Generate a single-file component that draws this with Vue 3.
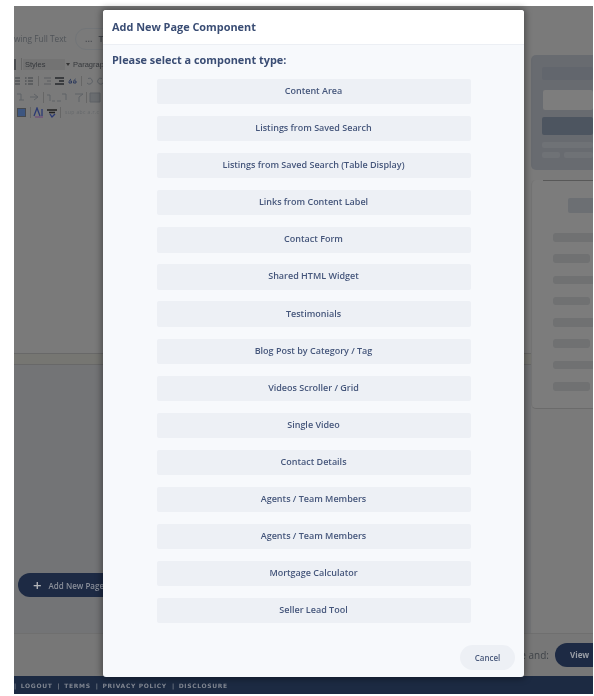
<script setup>
const components = [
  'Content Area',
  'Listings from Saved Search',
  'Listings from Saved Search (Table Display)',
  'Links from Content Label',
  'Contact Form',
  'Shared HTML Widget',
  'Testimonials',
  'Blog Post by Category / Tag',
  'Videos Scroller / Grid',
  'Single Video',
  'Contact Details',
  'Agents / Team Members',
  'Agents / Team Members',
  'Mortgage Calculator',
  'Seller Lead Tool'
]
const rows = ['long', 'short', 'long', 'short', 'long', 'short', 'long', 'short']
const footerLinks = ['LOGOUT', 'TERMS', 'PRIVACY POLICY', 'DISCLOSURE']
</script>

<template>
  <div class="page">
    <div class="stage">
      <div class="work">
        <section class="left">
          <div class="topbar">
            <span class="viewing">wing Full Text</span>
            <span class="pill"><span>...</span><span>Tr</span></span>
          </div>
          <div class="toolbar">
            <div class="tool-row r1">
              <span class="sq"></span><span class="sep"></span>
              <span class="select">Styles</span>
              <i class="caret"></i>
              <span class="para">Paragraph</span>
            </div>
            <div class="tool-row r2">
              <svg width="90" height="10" viewBox="0 0 90 10" fill="none" stroke="#3f4247" stroke-width="1">
                <path d="M1 2h5M1 5h5M1 8h5M11 2h1.500M11 5h1.500M11 8h1.500M14 2h5M14 5h5M14 8h5" />
                <path d="M24.500 0v10" stroke="#666" />
                <path d="M30 2h7M33 5h4M30 8h7" stroke="#5a5d60" />
                <path d="M41 2h9M45 5h5M41 8h9" stroke="#26282c" stroke-width="1.400" />
                <path d="M57 3c-1.500 1-2 2-2 4h2.500V5H56M61.500 3c-1.500 1-2 2-2 4H62V5h-1.500" stroke="#2d3a5c" />
                <path d="M67.500 0v10" stroke="#666" />
                <path d="M74 2.500a3 3 0 1 1-1 4.500" stroke="#5d6166" />
                <path d="M88 2.500a3 3 0 1 0 1 4.500" stroke="#5d6166" />
              </svg>
            </div>
            <div class="tool-row r3">
              <svg width="90" height="11" viewBox="0 0 90 11" fill="none" stroke="#5f6266" stroke-width="1">
                <path d="M3 2h4v6M5 8h5M16 5h7M20 2l4 3-4 3" />
                <path d="M29.500 0v11" stroke="#666" />
                <path d="M33 3h3v6M38 9h3M43 9h4M48 2h4v6" />
                <path d="M61 2h8l-4 3v5" />
                <path d="M72.500 0v11" stroke="#666" />
                <path d="M76 1h10v9H76z" fill="#6a6d70" />
              </svg>
            </div>
            <div class="tool-row r4">
              <svg width="48" height="11" viewBox="0 0 48 11" fill="none">
                <rect x="3.500" y="1.500" width="8" height="8" fill="#3d5680" stroke="#46494e" />
                <path d="M16.500 0v11" stroke="#666" />
                <path d="M20 9l3-8 3 8M28 9V2" stroke="#2b3a73" stroke-width="1.300" />
                <path d="M21 10h8" stroke="#6b3f7a" />
                <path d="M33 3h10M35 5.500h6" stroke="#222" stroke-width="1.500" />
                <path d="M36 7l2 3 3-3" stroke="#2b3a73" stroke-width="1.300" />
                <path d="M46.500 0v11" stroke="#666" />
              </svg>
              <span class="tiny">sup abc a.r.c</span>
            </div>
          </div>
          <div class="editor-end"></div>
          <div class="add-wrap">
            <span class="add-btn"><span class="plus">+</span>Add New Page</span>
          </div>
        </section>
        <aside class="right">
          <div class="card filters">
            <div class="f-bar"></div>
            <div class="f-input"></div>
            <div class="f-btn"></div>
            <div class="f-line"></div>
            <div class="f-two"><span class="a"></span><span class="b"></span></div>
          </div>
          <div class="card list">
            <div class="l-top"></div>
            <div class="l-head"></div>
            <div class="l-rows">
              <div v-for="(r, i) in rows" :key="i" class="l-row" :class="r"></div>
            </div>
          </div>
        </aside>
      </div>
      <div class="actions">
        <span class="save-text">Save and:</span>
        <span class="view-btn">View</span>
      </div>
      <footer class="footer">
        <span class="bar">|</span>
        <template v-for="(l, i) in footerLinks" :key="l">
          <span class="bar" v-if="i > 0">|</span>
          <span class="link">{{ l }}</span>
        </template>
      </footer>
    </div>

    <div class="modal">
      <header class="m-head">Add New Page Component</header>
      <div class="m-body">
        <h2 class="m-sub">Please select a component type:</h2>
        <div class="m-list">
          <button v-for="(c, i) in components" :key="i" class="m-item">{{ c }}</button>
        </div>
        <div class="m-foot"><button class="cancel">Cancel</button></div>
      </div>
    </div>
  </div>
</template>

<style>
html, body { margin: 0; background: #fff; }
</style>

<style scoped>
.page {
  position: relative;
  box-sizing: border-box;
  width: 594px;
  height: 696px;
  padding: 6px 1px 2px 14px;
  background: #fff;
  font-family: "Open Sans", sans-serif;
  overflow: hidden;
  filter: blur(0.3px);
}
.stage {
  height: 688px;
  display: flex;
  flex-direction: column;
  background: #7a7a7a;
  overflow: hidden;
}
.work { height: 627px; display: flex; }
.left { width: 517px; display: flex; flex-direction: column; flex: none; }
.topbar {
  height: 46px;
  box-sizing: border-box;
  padding-top: 22px;
  display: flex;
  align-items: flex-start;
  gap: 7px;
  font-size: 9px;
  color: #4f5358;
}
.viewing { width: 54px; white-space: nowrap; line-height: 22px; font-size: 8.300px; }
.pill {
  box-sizing: border-box;
  display: flex;
  gap: 6px;
  width: 60px;
  height: 22px;
  line-height: 20px;
  padding-left: 9px;
  border: 1px solid #727578;
  border-radius: 11px;
  color: #44474c;
  font-weight: 600;
}
.toolbar { height: 73px; background: #7a7a7a; overflow: hidden; }
.tool-row { display: flex; align-items: center; height: 14px; }
.r1 { height: 16px; margin-top: 4px; font-family: "Liberation Sans", sans-serif; font-size: 7.500px; color: #35383c; }
.sq { width: 2px; height: 11px; background: #4b4d50; }
.sep { width: 1px; height: 12px; background: #666; margin: 0 1px 0 5px; }
.select {
  display: block;
  box-sizing: border-box;
  width: 42px;
  height: 11px;
  line-height: 11px;
  padding-left: 2px;
  background: #737373;
}
.caret { width: 0; height: 0; margin-left: 1px; border: 2.500px solid transparent; border-top: 3px solid #333; border-bottom: 0; }
.para { margin-left: 3px; white-space: nowrap; }
.r2 { margin-top: 1px; height: 16px; }
.r3 { height: 16px; }
.r4 { height: 14px; }
.r4 svg { flex: none; }
.tiny { margin-left: 3px; font-size: 5px; color: #65686b; letter-spacing: .4px; white-space: nowrap; }
.editor-end {
  height: 12px;
  margin-top: 228px;
  box-sizing: border-box;
  border-top: 1px solid #686868;
  border-bottom: 1px solid #686868;
  background: #767672;
}
.add-wrap { flex: 1; background: #737476; padding: 208px 0 0 4px; box-sizing: border-box; }
.add-btn {
  display: flex;
  align-items: center;
  width: 130px;
  height: 24px;
  box-sizing: border-box;
  padding-left: 15px;
  border-radius: 12px;
  background: #1d2a44;
  color: #8a8f9a;
  font-size: 8px;
  font-weight: 600;
  white-space: nowrap;
}
.plus { font-size: 15px; line-height: 1; margin-right: 7px; color: #b4b6ba; }
.right { flex: 1; padding-top: 49px; background: #7a7a7a; }
.card { border-radius: 5px 0 0 5px; }
.filters {
  height: 115px;
  box-sizing: border-box;
  padding: 12px 0 0 11px;
  background: #686b70;
  overflow: hidden;
}
.f-bar { height: 13px; border-radius: 2px; background: #62666d; }
.f-input { height: 20px; margin: 10px 0 0 1px; border-radius: 2px; background: #7d7d7d; }
.f-btn { height: 18px; margin-top: 7px; border-radius: 2px; background: #4d5560; }
.f-line { height: 6px; margin-top: 7px; border-radius: 2px; background: #6f7276; }
.f-two { display: flex; gap: 4px; margin-top: 4px; }
.f-two span { height: 6px; border-radius: 2px; background: #6f7276; }
.f-two .a { width: 18px; flex: none; }
.f-two .b { flex: 1; }
.list {
  height: 229px;
  margin-top: 10px;
  box-sizing: border-box;
  padding: 0 0 0 21px;
  background: #7c7c7c;
  border-bottom: 1px solid #6b6b6b;
  border-left: 1px solid #747474;
}
.l-top { height: 1px; margin-left: -10px; background: #585858; }
.l-head { height: 15px; margin: 17px 0 0 15px; border-radius: 2px 0 0 2px; background: #6c6f73; }
.l-rows { display: flex; flex-direction: column; gap: 12.800px; margin-top: 20px; }
.l-row { height: 8.500px; border-radius: 3px; background: #707172; }
.l-row.long { border-radius: 3px 0 0 3px; }
.l-row.short { width: 37px; }
.actions {
  height: 43px;
  box-sizing: border-box;
  border-top: 1px solid #6f6f6f;
  background: #777;
  display: flex;
  align-items: flex-start;
  justify-content: flex-end;
  gap: 6px;
  padding-top: 9px;
  font-size: 9px;
}
.save-text { line-height: 24px; color: #3f4348; font-size: 10px; }
.view-btn {
  width: 38px;
  height: 24px;
  line-height: 24px;
  padding-left: 15px;
  box-sizing: border-box;
  border-radius: 12px 0 0 12px;
  background: #1d2a44;
  color: #9a9ea6;
  font-size: 8px;
  font-weight: 700;
  white-space: nowrap;
}
.footer {
  height: 18px;
  flex: none;
  display: flex;
  align-items: center;
  gap: 4px;
  background: #1c2a42;
  color: #7f8590;
  font-family: "DejaVu Sans", sans-serif;
  font-size: 6px;
  font-weight: 700;
  letter-spacing: .65px;
  white-space: nowrap;
}
.footer .link { margin-right: 1px; }

.modal {
  position: absolute;
  left: 103px;
  top: 10px;
  width: 421px;
  height: 667px;
  display: flex;
  flex-direction: column;
  border-radius: 3px;
  background: #f7f9fc;
  box-shadow: 0 0 6px 2px rgba(0, 0, 0, .35);
  overflow: hidden;
}
.m-head {
  height: 35px;
  flex: none;
  box-sizing: border-box;
  padding: 0 9px;
  line-height: 33px;
  background: #fff;
  border-bottom: 1px solid #eceff4;
  color: #3a4d74;
  font-size: 10.900px;
  font-weight: 700;
}
.m-body { flex: 1; display: flex; flex-direction: column; padding: 0 9px; }
.m-sub {
  margin: 7px 0 0;
  line-height: 16px;
  color: #3a4d74;
  font-size: 10.900px;
  font-weight: 700;
}
.m-list {
  display: flex;
  flex-direction: column;
  align-items: center;
  gap: 11.900px;
  margin-top: 11px;
}
.m-item {
  width: 314px;
  height: 25.200px;
  padding: 0 0 2px;
  border: 0;
  border-radius: 2px;
  background: #edf0f5;
  color: #45567b;
  font-family: inherit;
  font-size: 9px;
  font-weight: 600;
}
.m-foot { display: flex; justify-content: flex-end; margin-top: 22px; }
.cancel {
  width: 55px;
  height: 25px;
  padding: 0;
  border: 0;
  border-radius: 13px;
  background: #edf0f5;
  color: #4a5a7c;
  font-family: inherit;
  font-size: 8px;
  font-weight: 600;
}
</style>
